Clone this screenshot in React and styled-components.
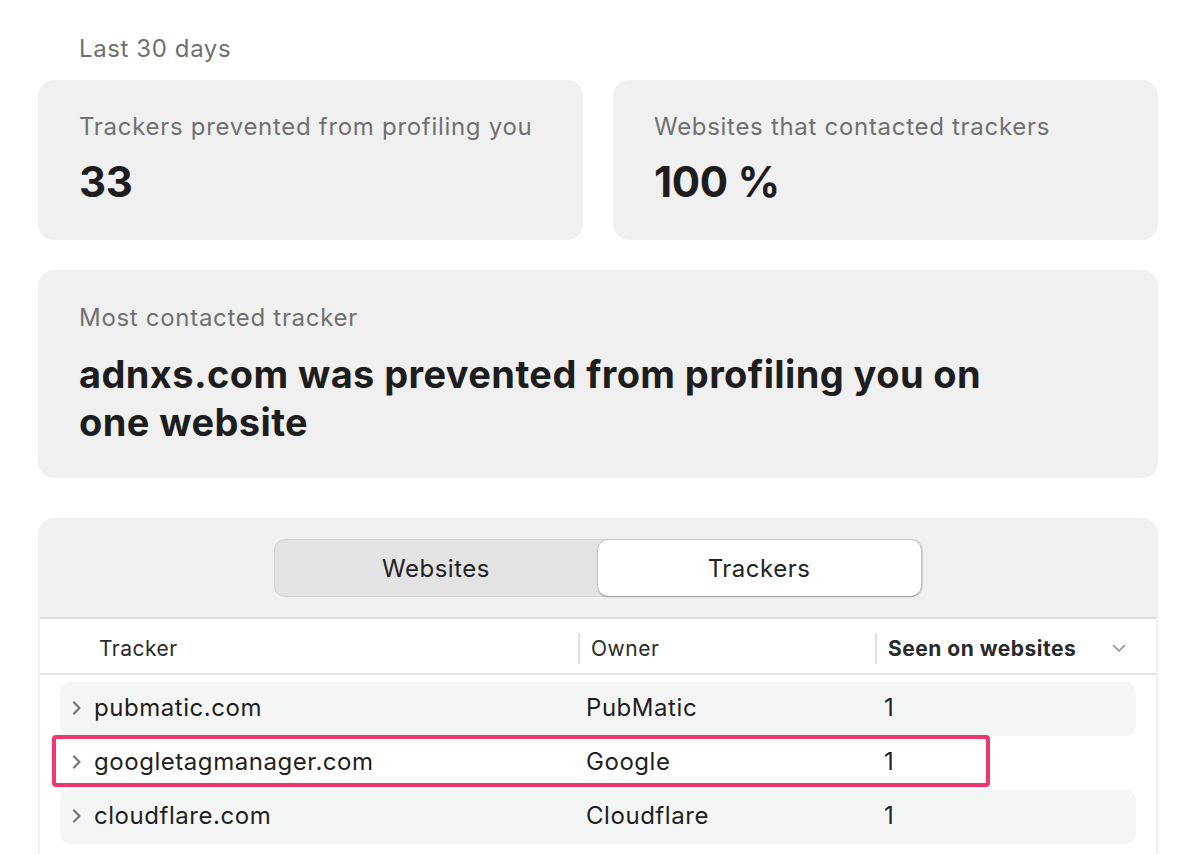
import React from "react";
import styled, { createGlobalStyle } from "styled-components";

const GlobalStyle = createGlobalStyle`
  html, body {
    margin: 0;
    padding: 0;
    background: #ffffff;
    font-family: Inter, "Open Sans", "Liberation Sans", sans-serif;
    color: #1f1f1f;
    -webkit-font-smoothing: antialiased;
  }
`;

const trackers = [
  { name: "pubmatic.com", owner: "PubMatic", seen: 1 },
  { name: "googletagmanager.com", owner: "Google", seen: 1, marked: true },
  { name: "cloudflare.com", owner: "Cloudflare", seen: 1 },
];

function Chevron() {
  return (
    <svg width="10" height="16" viewBox="0 0 10 16">
      <path d="M2 2.5 L7.5 8 L2 13.5" fill="none" stroke="#777" strokeWidth="2.2" strokeLinecap="round" strokeLinejoin="round" />
    </svg>
  );
}

function SortChevron() {
  return (
    <svg width="14" height="9" viewBox="0 0 14 9">
      <path d="M1.5 1.5 L7 7 L12.5 1.5" fill="none" stroke="#8a8a8a" strokeWidth="1.5" strokeLinecap="round" strokeLinejoin="round" />
    </svg>
  );
}

export default function App() {
  return (
    <Page>
      <GlobalStyle />
      <Period>Last 30 days</Period>
      <StatGrid>
        <Card>
          <Label>Trackers prevented from profiling you</Label>
          <Value>33</Value>
        </Card>
        <Card>
          <Label>Websites that contacted trackers</Label>
          <Value>100 %</Value>
        </Card>
      </StatGrid>
      <Card $tall>
        <Label>Most contacted tracker</Label>
        <Headline>adnxs.com was prevented from profiling you on one website</Headline>
      </Card>
      <TableCard>
        <SegmentBar>
          <Segmented>
            <Segment>Websites</Segment>
            <Segment $active>Trackers</Segment>
          </Segmented>
        </SegmentBar>
        <Table>
          <HeaderRow>
            <HeadCell $first>Tracker</HeadCell>
            <HeadCell $divider>Owner</HeadCell>
            <HeadCell $divider $sorted>
              Seen on websites
              <SortChevron />
            </HeadCell>
          </HeaderRow>
          <Body>
            {trackers.map((t, i) => (
              <Row key={t.name} $striped={i % 2 === 0}>
                <NameCell>
                  <Chevron />
                  {t.name}
                </NameCell>
                <OwnerCell>{t.owner}</OwnerCell>
                <CountCell>{t.seen}</CountCell>
                {t.marked && <Highlight />}
              </Row>
            ))}
          </Body>
        </Table>
      </TableCard>
    </Page>
  );
}

const Page = styled.div`
  width: 1120px;
  padding: 33px 32px 0 38px;
  display: flex;
  flex-direction: column;
  height: 854px;
  box-sizing: content-box;
  overflow: hidden;
`;

const Period = styled.div`
  font-size: 24px;
  color: #707070;
  padding-left: 41px;
  line-height: 32px;
  margin-bottom: 15px;
  letter-spacing: 0.6px;
`;

const StatGrid = styled.div`
  display: grid;
  grid-template-columns: 1fr 1fr;
  gap: 30px;
  margin-bottom: 30px;
`;

const Card = styled.div`
  background: #f0f0f0;
  border-radius: 16px;
  padding: ${(p) => (p.$tall ? "32px 41px 30px" : "31px 41px 28px")};
  height: ${(p) => (p.$tall ? "208px" : "160px")};
  box-sizing: border-box;
  margin-bottom: ${(p) => (p.$tall ? "40px" : "0")};
`;

const Label = styled.div`
  font-size: 24px;
  color: #707070;
  line-height: 32px;
  letter-spacing: 0.7px;
`;

const Value = styled.div`
  font-size: 42px;
  font-weight: 700;
  color: #1d1d1d;
  margin-top: 14px;
  line-height: 50px;
  letter-spacing: -0.3px;
`;

const Headline = styled.div`
  font-size: 38px;
  font-weight: 700;
  color: #1d1d1d;
  line-height: 48px;
  margin-top: 16px;
  max-width: 940px;
  letter-spacing: 0.4px;
`;

const TableCard = styled.div`
  background: #f0f0f0;
  border-radius: 16px 16px 0 0;
  padding: 0 2px;
  flex: 1;
  display: flex;
  flex-direction: column;
`;

const SegmentBar = styled.div`
  display: flex;
  justify-content: center;
  padding: 21px 0 20px;
  border-bottom: 2px solid #dcdcdc;
`;

const Segmented = styled.div`
  display: grid;
  grid-template-columns: 1fr 1fr;
  width: 649px;
  height: 58px;
  box-sizing: border-box;
  background: #e3e3e3;
  border: 1px solid #d3d3d3;
  border-radius: 11px;
  padding: 0 1px 0 0;
`;

const Segment = styled.div`
  display: flex;
  align-items: center;
  justify-content: center;
  font-size: 24px;
  letter-spacing: 0.5px;
  color: #222;
  border-radius: 10px;
  background: ${(p) => (p.$active ? "#ffffff" : "transparent")};
  box-shadow: ${(p) => (p.$active ? "0 1px 2px rgba(0,0,0,0.25), 0 0 0 0.5px rgba(0,0,0,0.12)" : "none")};
`;

const Table = styled.div`
  background: #ffffff;
  flex: 1;
`;

const HeaderRow = styled.div`
  display: grid;
  grid-template-columns: 538px 297px 1fr;
  height: 56px;
  padding-top: 4px;
  box-sizing: border-box;
  align-items: center;
  border-bottom: 2px solid #e2e2e2;
`;

const HeadCell = styled.div`
  display: flex;
  align-items: center;
  justify-content: space-between;
  font-size: 21px;
  font-weight: ${(p) => (p.$sorted ? 700 : 400)};
  color: #2a2a2a;
  height: 31px;
  padding-left: ${(p) => (p.$first ? "59px" : "11px")};
  padding-right: 30px;
  border-left: ${(p) => (p.$divider ? "2px solid #e0e0e0" : "none")};
  letter-spacing: 0.5px;
`;

const Body = styled.div`
  padding: 7px 20px 0;
  display: flex;
  flex-direction: column;
`;

const Row = styled.div`
  position: relative;
  display: grid;
  grid-template-columns: 526px 298px 1fr;
  height: 54px;
  align-items: center;
  border-radius: 10px;
  background: ${(p) => (p.$striped ? "#f4f5f5" : "#ffffff")};
  font-size: 24px;
  letter-spacing: 0.55px;
  color: #1f1f1f;
  line-height: 30px;
  padding-bottom: 3px;
  box-sizing: border-box;
`;

const NameCell = styled.div`
  display: flex;
  align-items: center;
  gap: 12px;
  padding-left: 12px;
`;

const OwnerCell = styled.div``;

const CountCell = styled.div``;

const Highlight = styled.div`
  position: absolute;
  left: -8px;
  top: -1px;
  width: 938px;
  height: 52px;
  box-sizing: border-box;
  border: 4px solid #f4356e;
  border-radius: 4px;
  pointer-events: none;
`;
